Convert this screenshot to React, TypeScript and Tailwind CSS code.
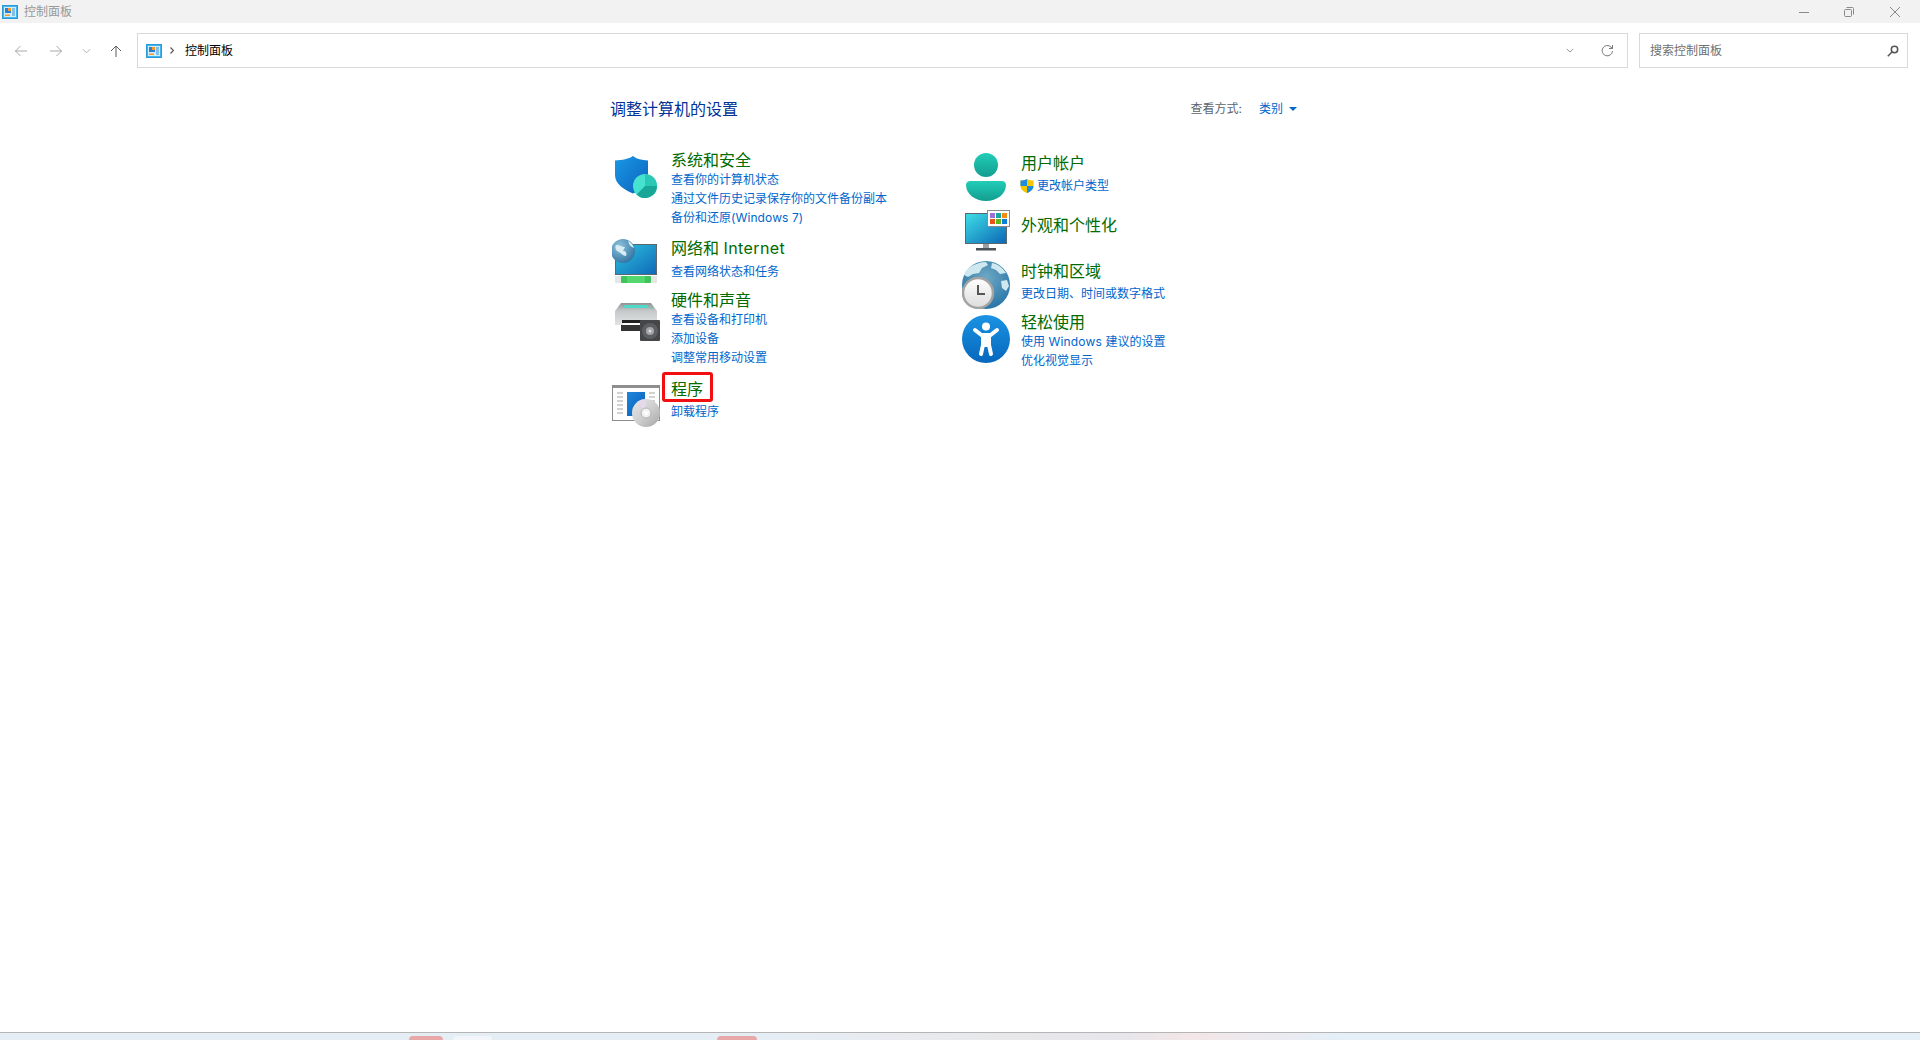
import React from 'react';

const CpIcon = ({ className }: { className?: string }) => (
  <svg className={className} viewBox="0 0 16 14">
    <rect x="0.5" y="0.5" width="15" height="13" fill="#3fb4ee" stroke="#2a9ad8" />
    <rect x="2" y="2" width="12" height="10" fill="#cfeefc" />
    <path d="M3 3h3v3h3v2H3z" fill="#2f7fd0" />
    <path d="M6 3h3v3H6z" fill="#f29a2e" />
    <rect x="3" y="9.5" width="5" height="1.5" fill="#f29a2e" />
    <path d="M10 4h3M10 6h3M10 8h3M10 10h3" stroke="#3a8ed6" />
  </svg>
);

const ShieldIcon = () => (
  <svg className="h-12 w-12" viewBox="0 0 48 48">
    <defs>
      <linearGradient id="sh" x1="0" y1="0" x2="1" y2="1">
        <stop offset="0" stopColor="#1a98e6" />
        <stop offset="1" stopColor="#0a62bd" />
      </linearGradient>
    </defs>
    <path d="M21 6c3.500 3 8.500 4 15 4.500v14c0 9-6 15-15 19C12 39.500 3 34 3 25V10.500C10 10 17 9 21 6z" fill="url(#sh)" />
    <circle cx="33" cy="36" r="12" fill="#45e2d0" />
    <path d="M33 36h12a12 12 0 0 1-20.500 8.500z" fill="#18a796" />
    <path d="M33 24a12 12 0 0 1 12 12H33z" fill="#2cc8b6" />
  </svg>
);

const NetworkIcon = () => (
  <svg className="h-12 w-12" viewBox="0 0 48 48">
    <defs>
      <linearGradient id="mon" x1="0" y1="0" x2="1" y2="1">
        <stop offset="0" stopColor="#2fc3dd" />
        <stop offset="1" stopColor="#0e68b8" />
      </linearGradient>
      <radialGradient id="glb" cx="0.35" cy="0.3" r="0.8">
        <stop offset="0" stopColor="#8fc3dc" />
        <stop offset="1" stopColor="#2b6f9f" />
      </radialGradient>
    </defs>
    <rect x="3.500" y="5.500" width="41" height="30" fill="url(#mon)" stroke="#5c6870" />
    <rect x="3" y="37" width="42" height="7" fill="#e4e6e6" />
    <rect x="9" y="37" width="30" height="7" rx="1" fill="#3fc45c" />
    <rect x="15" y="37" width="18" height="7" fill="#54d86e" />
    <circle cx="11" cy="12" r="12" fill="url(#glb)" />
    <path d="M4 6c4 0 6 2 9 2l-2 4c3 0 4 2 3 5-3 0-6-4-9-5-2-2-2-4-1-6zM16 2c3 1 5 4 6 7-3-1-5-3-6-7z" fill="#d8ecf4" />
  </svg>
);

const PrinterIcon = () => (
  <svg className="h-12 w-12" viewBox="0 0 48 48">
    <defs>
      <linearGradient id="pr" x1="0" y1="0" x2="0" y2="1">
        <stop offset="0" stopColor="#8d9294" />
        <stop offset="0.35" stopColor="#c4c8c9" />
        <stop offset="1" stopColor="#e2e4e4" />
      </linearGradient>
    </defs>
    <path d="M9 5h30l6 8v14H3V13z" fill="url(#pr)" />
    <path d="M13 7h22l2 3H11z" fill="#50d8c8" />
    <rect x="9" y="27" width="22" height="6" fill="#333333" />
    <rect x="10" y="22" width="20" height="3" fill="#1f1f1f" />
    <rect x="11" y="25" width="19" height="2" fill="#fafafa" />
    <circle cx="40" cy="10" r="0.800" fill="#36d46a" />
    <rect x="28" y="22" width="20" height="21" rx="1" fill="#444648" />
    <circle cx="38" cy="33" r="8" fill="#5c5f62" />
    <circle cx="38" cy="33" r="4" fill="#a3a6a8" />
    <circle cx="38" cy="33" r="1.500" fill="#dcdddf" />
  </svg>
);

const ProgramsIcon = () => (
  <svg className="h-12 w-12" viewBox="0 0 48 48">
    <defs>
      <linearGradient id="pb" x1="0" y1="0" x2="1" y2="1">
        <stop offset="0" stopColor="#1e86dc" />
        <stop offset="1" stopColor="#0a5fb4" />
      </linearGradient>
      <linearGradient id="cd" x1="0" y1="0" x2="1" y2="1">
        <stop offset="0" stopColor="#e9e9e9" />
        <stop offset="0.5" stopColor="#cfcfcf" />
        <stop offset="1" stopColor="#a6a6a6" />
      </linearGradient>
    </defs>
    <rect x="0.500" y="0.500" width="47" height="35" fill="#fdfdfd" stroke="#8c8c8c" />
    <rect x="1" y="1" width="46" height="2" fill="#8f8f8f" />
    <path d="M5 8h6M5 12h6M5 16h6M5 20h6M5 24h6M5 28h6M37 8h6M37 12h6M37 16h6" stroke="#a8a8a8" />
    <rect x="15" y="7" width="18" height="24" fill="url(#pb)" />
    <circle cx="34" cy="28" r="14" fill="url(#cd)" />
    <path d="M34 28 25 17a14 14 0 0 1 9-3z" fill="#e8d8ec" opacity="0.8" />
    <circle cx="34" cy="28" r="5" fill="#f2f2f2" stroke="#b4b4b4" />
    <circle cx="34" cy="28" r="2" fill="#ffffff" />
  </svg>
);

const UserIcon = () => (
  <svg className="h-12 w-12" viewBox="0 0 48 48">
    <defs>
      <linearGradient id="usr" x1="0" y1="0" x2="0" y2="1">
        <stop offset="0" stopColor="#22cdb8" />
        <stop offset="1" stopColor="#129d8f" />
      </linearGradient>
    </defs>
    <circle cx="24" cy="12" r="12" fill="url(#usr)" />
    <path d="M8 28h32c2 0 4 1.500 4 4 0 9-9 16-20 16S4 41 4 32c0-2.500 2-4 4-4z" fill="url(#usr)" />
  </svg>
);

const AppearanceIcon = () => (
  <svg className="h-12 w-12" viewBox="0 0 48 48">
    <defs>
      <linearGradient id="dsp" x1="0" y1="0" x2="1" y2="1">
        <stop offset="0" stopColor="#3edfe6" />
        <stop offset="1" stopColor="#0c66b6" />
      </linearGradient>
    </defs>
    <rect x="3.500" y="7.500" width="41" height="30" fill="url(#dsp)" stroke="#5b6770" />
    <rect x="21" y="38" width="6" height="4" fill="#9aa1a4" />
    <rect x="14" y="42" width="20" height="2.500" fill="#4b5358" />
    <rect x="25.500" y="4.500" width="22" height="16" fill="#ffffff" stroke="#8a8a8a" />
    <rect x="28" y="7" width="5" height="5" fill="#9c6fd6" />
    <rect x="34" y="7" width="5" height="5" fill="#14a8a0" />
    <rect x="40" y="7" width="5" height="5" fill="#f28c0f" />
    <rect x="28" y="13" width="5" height="5" fill="#e8541a" />
    <rect x="34" y="13" width="5" height="5" fill="#62b81a" />
    <rect x="40" y="13" width="5" height="5" fill="#0c7fdc" />
  </svg>
);

const ClockIcon = () => (
  <svg className="h-12 w-12" viewBox="0 0 48 48">
    <defs>
      <radialGradient id="erth" cx="0.5" cy="0.35" r="0.75">
        <stop offset="0" stopColor="#6fa8c4" />
        <stop offset="1" stopColor="#1f6ea3" />
      </radialGradient>
      <linearGradient id="fce" x1="0" y1="0" x2="0" y2="1">
        <stop offset="0" stopColor="#ffffff" />
        <stop offset="1" stopColor="#dcdcdc" />
      </linearGradient>
    </defs>
    <circle cx="24" cy="24" r="24" fill="url(#erth)" />
    <path d="M8 6c5-3 10-5 16-5l2 3-6 3-3 5-6 1-5 3-4-2c1-3 3-6 6-8zM30 2c6 1 11 5 14 10l-6 1-4-4-5-2zM39 20l6-1 2 6-3 5-4-3z" fill="#cfe8f0" />
    <circle cx="16" cy="32" r="15" fill="url(#fce)" stroke="#a3a3a3" strokeWidth="2.500" />
    <path d="M16 24v9h7" fill="none" stroke="#555555" strokeWidth="2" />
  </svg>
);

const AccessIcon = () => (
  <svg className="h-12 w-12" viewBox="0 0 48 48">
    <defs>
      <linearGradient id="acc" x1="0" y1="0" x2="0" y2="1">
        <stop offset="0" stopColor="#1a93e2" />
        <stop offset="1" stopColor="#0767bd" />
      </linearGradient>
    </defs>
    <circle cx="24" cy="24" r="24" fill="url(#acc)" />
    <circle cx="24" cy="11.500" r="4" fill="#ffffff" />
    <path d="M13 15 20 20.500h8L35 15" fill="none" stroke="#ffffff" strokeWidth="4" strokeLinecap="round" strokeLinejoin="round" />
    <path d="M21 20v10l-2 9M27 20v10l2 9M21 20h6v10h-6z" fill="#ffffff" stroke="#ffffff" strokeWidth="4" strokeLinecap="round" strokeLinejoin="round" />
  </svg>
);

const UacShield = () => (
  <svg className="mr-[3px] h-[14px] w-[14px] shrink-0" viewBox="0 0 14 14">
    <path d="M7 0c2 1 4 1.500 6.500 1.500V7c0 3-2.500 5.500-6.500 7C3 12.500.5 10 .5 7V1.500C3 1.500 5 1 7 0z" fill="#f7c600" />
    <path d="M7 0v7H.5V1.500C3 1.500 5 1 7 0zM7 7h6.500c0 3-2.500 5.500-6.500 7z" fill="#1b8de0" />
  </svg>
);

const ChevronSmall = ({ className }: { className?: string }) => (
  <svg className={className} viewBox="0 0 10 6" fill="none" stroke="currentColor">
    <path d="M1 1l4 4 4-4" />
  </svg>
);

type Item = {
  icon: React.ReactNode;
  title: React.ReactNode;
  wrap: string;
  iconBox: string;
  textBox: string;
  linkBox: string;
  links: React.ReactNode[];
  boxed?: boolean;
};

const leftItems: Item[] = [
  { icon: <ShieldIcon />, title: '系统和安全', wrap: '', iconBox: '', textBox: '', linkBox: '', links: ['查看你的计算机状态', '通过文件历史记录保存你的文件备份副本', <>备份和还原<span className="tracking-[0.1px]">(Windows 7)</span></>] },
  { icon: <NetworkIcon />, title: <>网络和 <span className="tracking-[0.4px]">Internet</span></>, wrap: 'mt-[11px]', iconBox: 'mt-px', textBox: '', linkBox: 'mt-[4px]', links: ['查看网络状态和任务'] },
  { icon: <PrinterIcon />, title: '硬件和声音', wrap: 'mt-[3px]', iconBox: 'mt-[8px]', textBox: '', linkBox: '', links: ['查看设备和打印机', '添加设备', '调整常用移动设置'] },
  { icon: <ProgramsIcon />, title: '程序', wrap: 'mt-[12px]', iconBox: 'mt-[6px]', textBox: '', linkBox: 'mt-[3px]', links: ['卸载程序'], boxed: true },
];

const rightItems: Item[] = [
  {
    icon: <UserIcon />, title: '用户帐户', wrap: '', iconBox: '', textBox: '', linkBox: 'mt-[3px]',
    links: [<span className="-ml-px flex items-center"><UacShield />更改帐户类型</span>],
  },
  { icon: <AppearanceIcon />, title: '外观和个性化', wrap: 'mt-[5px]', iconBox: '', textBox: 'pt-[9px]', linkBox: '', links: [] },
  { icon: <ClockIcon />, title: '时钟和区域', wrap: 'mt-[7px]', iconBox: '', textBox: '', linkBox: 'mt-[3px]', links: ['更改日期、时间或数字格式'] },
  { icon: <AccessIcon />, title: '轻松使用', wrap: 'mt-[3px]', iconBox: 'mt-[3px]', textBox: '', linkBox: '', links: [<>使用 <span className="tracking-[0.2px]">Windows</span> 建议的设置</>, '优化视觉显示'] },
];

const Category = ({ item }: { item: Item }) => (
  <div className={`flex items-start pl-[2px] ${item.wrap}`}>
    <div className={`mr-[11px] h-12 w-12 shrink-0 ${item.iconBox}`}>{item.icon}</div>
    <div className={item.textBox}>
      <div className="relative w-fit text-[16px] leading-[20px] text-[#006b00]">
        {item.title}
        {item.boxed && (
          <div className="absolute -left-[9px] -top-[7px] h-[30px] w-[51px] rounded-[3px] border-[3px] border-[#f20f0f]" />
        )}
      </div>
      <div className={item.linkBox}>
        {item.links.map((link, i) => (
          <div key={i} className="text-[12px] leading-[19px] text-[#0066cc]">{link}</div>
        ))}
      </div>
    </div>
  </div>
);

const App: React.FC = () => {
  return (
    <div className="flex h-screen flex-col overflow-hidden bg-white font-['Inter','Noto_Sans_CJK_SC',sans-serif]">
      {/* title bar */}
      <div className="flex h-[23px] shrink-0 items-center bg-[#f2f2f2] pl-[2px]">
        <CpIcon className="h-[14px] w-[16px]" />
        <span className="ml-[6px] text-[12px] text-[#999999]">控制面板</span>
        <div className="ml-auto flex items-center pr-[20px] text-[#8a8a8a]">
          <svg className="h-[10px] w-[10px]" viewBox="0 0 10 10" stroke="currentColor" fill="none"><path d="M0 5.500h10" /></svg>
          <svg className="ml-[35px] h-[10px] w-[10px]" viewBox="0 0 10 10" stroke="currentColor" fill="none"><rect x="0.500" y="2.500" width="7" height="7" rx="1" /><path d="M2.500 0.500h6a1 1 0 0 1 1 1v6" /></svg>
          <svg className="ml-[36px] h-[10px] w-[10px]" viewBox="0 0 10 10" stroke="currentColor" fill="none"><path d="M0 0l10 10M10 0L0 10" /></svg>
        </div>
      </div>

      {/* address row */}
      <div className="flex h-[54px] shrink-0 items-center pl-[15px] pr-[12px] pt-px">
        <svg className="h-[12px] w-[12px] text-[#a8a8a8]" viewBox="0 0 12 12" fill="none" stroke="currentColor"><path d="M0 6h12M5.500 1 .5 6l5 5" /></svg>
        <svg className="ml-[23px] h-[12px] w-[12px] text-[#a8a8a8]" viewBox="0 0 12 12" fill="none" stroke="currentColor"><path d="M0 6h12M6.500 1l5 5-5 5" /></svg>
        <ChevronSmall className="ml-[20px] h-[6px] w-[9px] text-[#a8a8a8]" />
        <svg className="ml-[19px] h-[12px] w-[12px] text-[#5a5a5a]" viewBox="0 0 12 12" fill="none" stroke="currentColor"><path d="M6 12V1M1 6l5-5 5 5" /></svg>
        <div className="ml-[15px] flex h-[35px] flex-1 items-center border border-[#d9d9d9] pl-[8px]">
          <CpIcon className="h-[14px] w-[16px]" />
          <svg className="ml-[8px] h-[7px] w-[4px] text-[#555555]" viewBox="0 0 4 7" fill="none" stroke="currentColor" strokeWidth="1.200"><path d="M.5.500l3 3-3 3" /></svg>
          <span className="ml-[11px] text-[12px] text-black">控制面板</span>
          <ChevronSmall className="ml-auto h-[5px] w-[8px] text-[#777777]" />
          <svg className="ml-[27px] mr-[13px] h-[13px] w-[13px] text-[#7a7a7a]" viewBox="0 0 13 13" fill="none" stroke="currentColor"><path d="M11.500 7a5.200 5.200 0 1 1-1.500-4l1.500 1.500M11.500 1v3.500H8" /></svg>
        </div>
        <div className="ml-[11px] flex h-[35px] w-[269px] items-center justify-between border border-[#d9d9d9] pl-[10px] pr-[8px]">
          <span className="text-[12px] text-[#6f6f6f]">搜索控制面板</span>
          <svg className="h-[12px] w-[12px] text-[#555555]" viewBox="0 0 12 12" fill="none" stroke="currentColor" strokeWidth="1.500"><circle cx="7.500" cy="4.500" r="3.200" /><path d="M5 7 .8 11.200" /></svg>
        </div>
      </div>

      {/* content */}
      <div className="mx-auto flex-1 w-[700px] pt-[21px]">
        <div className="flex h-[22px] items-center justify-between pr-[13px]">
          <h1 className="text-[16px] leading-[22px] font-normal text-[#003399]">调整计算机的设置</h1>
          <div className="flex items-center text-[12px]">
            <span className="text-[#5a6470]">查看方式:</span>
            <span className="ml-[17px] text-[#0066cc]">类别</span>
            <span className="ml-[6px] h-0 w-0 border-x-[4px] border-t-[4px] border-x-transparent border-t-[#0066cc]" />
          </div>
        </div>
        <div className="mt-[30px] flex">
          <div className="w-[350px]">
            {leftItems.map((item, i) => <Category key={i} item={item} />)}
          </div>
          <div className="mt-[3px] w-[350px]">
            {rightItems.map((item, i) => <Category key={i} item={item} />)}
          </div>
        </div>
      </div>

      {/* bit of the window behind */}
      <div className="flex h-[8px] shrink-0 border-t border-[#b5b5b5] bg-[linear-gradient(90deg,#e6eef5_0%,#e6eef5_40%,#e8e8ea_52%,#e6e6ec_58%,#f3e6e6_62%,#e4eff8_70%,#e4eff8_100%)] pl-[409px] pt-[3px]">
        <div className="h-[5px] w-[34px] rounded-t-[4px] bg-[#e8a8a8]" />
        <div className="ml-[10px] h-[5px] w-[39px] rounded-t-[4px] bg-[#f2f6fa]" />
        <div className="ml-[225px] h-[5px] w-[40px] rounded-t-[4px] bg-[#e8a8a8]" />
      </div>
    </div>
  );
};

export default App;
